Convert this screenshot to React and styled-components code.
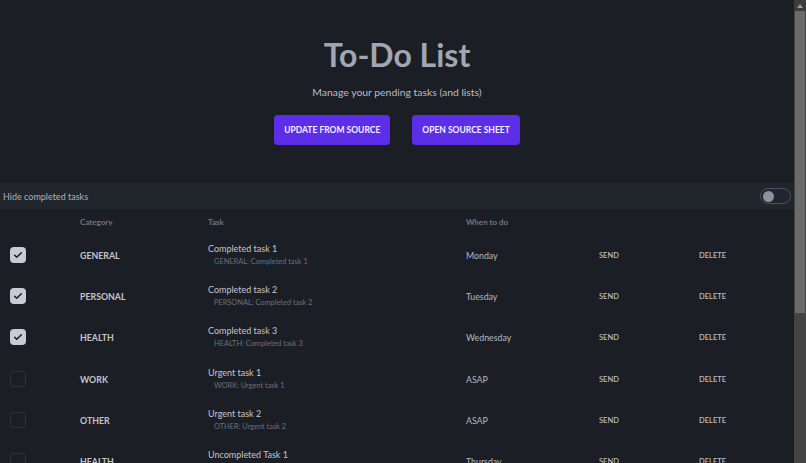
import React, { useState } from "react";
import styled, { createGlobalStyle } from "styled-components";

const GlobalStyle = createGlobalStyle`
  html {
    color-scheme: dark;
  }
  body {
    margin: 0;
    background: #1b1e25;
    font-family: "Lato", "Noto Sans", sans-serif;
    color: #c5c8cf;
    overflow: hidden;
  }
`;

const tasks = [
  { id: 1, category: "GENERAL", title: "Completed task 1", when: "Monday", done: true },
  { id: 2, category: "PERSONAL", title: "Completed task 2", when: "Tuesday", done: true },
  { id: 3, category: "HEALTH", title: "Completed task 3", when: "Wednesday", done: true },
  { id: 4, category: "WORK", title: "Urgent task 1", when: "ASAP", done: false },
  { id: 5, category: "OTHER", title: "Urgent task 2", when: "ASAP", done: false },
  { id: 6, category: "HEALTH", title: "Uncompleted Task 1", when: "Thursday", done: false },
  { id: 7, category: "WORK", title: "Uncompleted Task 2", when: "Friday", done: false },
  { id: 8, category: "PERSONAL", title: "Uncompleted Task 3", when: "Saturday", done: false },
  { id: 9, category: "GENERAL", title: "Uncompleted Task 4", when: "Sunday", done: false },
  { id: 10, category: "OTHER", title: "Someday task", when: "Someday", done: false },
];

const App = () => {
  const [hideDone, setHideDone] = useState(false);
  const [items, setItems] = useState(tasks);

  const toggleItem = (id) => {
    setItems(items.map((t) => (t.id === id ? { ...t, done: !t.done } : t)));
  };

  const shown = hideDone ? items.filter((t) => !t.done) : items;

  return (
    <Layout>
      <GlobalStyle />
      <Content>
        <Header>
          <Title>To-Do List</Title>
          <Subtitle>Manage your pending tasks (and lists)</Subtitle>
          <ButtonRow>
            <Button>Update from source</Button>
            <Button>Open source sheet</Button>
          </ButtonRow>
        </Header>

        <FilterBar>
          <span>Hide completed tasks</span>
          <Switch $on={hideDone} onClick={() => setHideDone(!hideDone)}>
            <Knob $on={hideDone} />
          </Switch>
        </FilterBar>

        <Table>
          <HeadRow>
            <span />
            <span>Category</span>
            <span>Task</span>
            <span>When to do</span>
            <span />
            <span />
          </HeadRow>
          {shown.map((t) => (
            <Row key={t.id}>
              <CheckCell>
                <Check $checked={t.done} onClick={() => toggleItem(t.id)}>
                  {t.done && (
                    <svg width="10" height="10" viewBox="0 0 24 24">
                      <path
                        d="M4 12.5l5 5L20 6.5"
                        fill="none"
                        stroke="#1b1e25"
                        strokeWidth="3.6"
                        strokeLinecap="round"
                        strokeLinejoin="round"
                      />
                    </svg>
                  )}
                </Check>
              </CheckCell>
              <Category>{t.category}</Category>
              <TaskCell>
                <TaskTitle>{t.title}</TaskTitle>
                <TaskSub>
                  {t.category}: {t.title}
                </TaskSub>
              </TaskCell>
              <When>{t.when}</When>
              <Action>Send</Action>
              <Action>Delete</Action>
            </Row>
          ))}
        </Table>
      </Content>

      <ScrollRail>
        <ScrollArrow>
          <svg width="6" height="4" viewBox="0 0 6 4">
            <path d="M0 4L3 0L6 4Z" fill="#9a9a9a" />
          </svg>
        </ScrollArrow>
        <ScrollThumb />
      </ScrollRail>
    </Layout>
  );
};

const Layout = styled.div`
  display: grid;
  grid-template-columns: 1fr 12px;
  align-items: start;
`;

const Content = styled.main`
  min-width: 0;
  padding-bottom: 20px;
`;

const ScrollRail = styled.div`
  position: sticky;
  top: 0;
  height: 100vh;
  display: flex;
  flex-direction: column;
  background: #444444;
`;

const ScrollArrow = styled.div`
  height: 11px;
  display: flex;
  align-items: center;
  justify-content: center;
  background: #3c3c3c;
`;

const ScrollThumb = styled.div`
  height: 302px;
  margin: 0 1px;
  background: #6b6b6b;
`;

const Header = styled.header`
  display: flex;
  flex-direction: column;
  align-items: center;
  padding: 36px 0 38px;
`;

const Title = styled.h1`
  margin: 0;
  font-size: 32px;
  line-height: 38px;
  font-weight: 700;
  color: #a1a6b1;
`;

const Subtitle = styled.p`
  margin: 11px 0 0;
  font-size: 10.4px;
  line-height: 15px;
  color: #b9bdc6;
`;

const ButtonRow = styled.div`
  display: flex;
  gap: 22px;
  margin-top: 15px;
`;

const Button = styled.button`
  height: 30px;
  padding: 0 10px;
  border: none;
  border-radius: 4px;
  background: #5c2ee8;
  color: #f2f0ff;
  font-family: inherit;
  font-size: 8.5px;
  font-weight: 700;
  text-transform: uppercase;
  cursor: pointer;
`;

const FilterBar = styled.div`
  display: flex;
  align-items: center;
  justify-content: space-between;
  height: 26px;
  padding: 0 3px;
  background: #21252c;
  font-size: 9px;
  color: #aeb2bb;
`;

const Switch = styled.div`
  position: relative;
  width: 29px;
  height: 14px;
  border: 1px solid #4a4f5b;
  border-radius: 8px;
  background: ${(p) => (p.$on ? "#5c2ee8" : "transparent")};
  cursor: pointer;
`;

const Knob = styled.div`
  position: absolute;
  top: 1.5px;
  left: ${(p) => (p.$on ? "16px" : "2px")};
  width: 11px;
  height: 11px;
  border-radius: 50%;
  background: #8b91a0;
`;

const Table = styled.div`
  display: flex;
  flex-direction: column;
`;

const grid = `
  display: grid;
  grid-template-columns: 80px 128px 258px 133px 100px 1fr;
  align-items: center;
`;

const HeadRow = styled.div`
  ${grid}
  height: 25px;
  font-size: 8px;
  font-weight: 700;
  color: #6f7480;
`;

const Row = styled.div`
  ${grid}
  height: 41.3px;
`;

const CheckCell = styled.div`
  padding-left: 10px;
`;

const Check = styled.div`
  display: flex;
  align-items: center;
  justify-content: center;
  width: 16px;
  height: 16px;
  box-sizing: border-box;
  border-radius: 4px;
  background: ${(p) => (p.$checked ? "#c7cbd4" : "transparent")};
  border: ${(p) => (p.$checked ? "none" : "1.5px solid #2d313a")};
  cursor: pointer;
`;

const Category = styled.div`
  font-size: 8.8px;
  font-weight: 700;
  color: #c2c5cc;
  padding-top: 1px;
`;

const TaskCell = styled.div`
  display: flex;
  flex-direction: column;
`;

const TaskTitle = styled.div`
  font-size: 9px;
  line-height: 14px;
  color: #c2c5cc;
`;

const TaskSub = styled.div`
  font-size: 7.4px;
  line-height: 12px;
  padding-left: 6px;
  color: #6b707b;
`;

const When = styled.div`
  font-size: 8.8px;
  color: #b4b8c0;
  padding-top: 1px;
`;

const Action = styled.div`
  font-size: 7.5px;
  font-weight: 600;
  text-transform: uppercase;
  color: #b8bcc4;
  padding-top: 1px;
  cursor: pointer;
`;

export default App;
